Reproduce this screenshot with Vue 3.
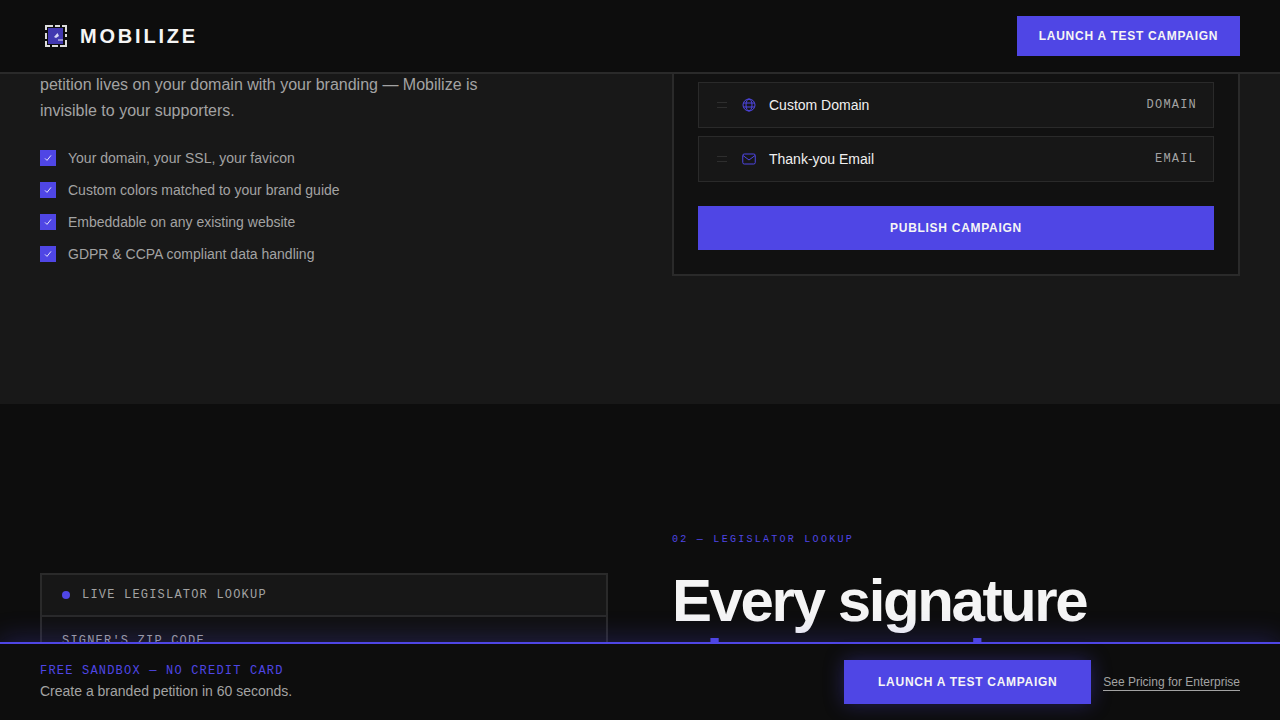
<template>
  <div class="page">
    <header class="topbar">
      <div class="brand">
        <svg class="brand__mark" width="24" height="24" viewBox="0 0 24 24" aria-hidden="true">
          <rect x="4" y="4" width="15" height="16" fill="#4238b0" />
          <path d="M10 13l3.500-4 1.500 3-3 2z" fill="#d8d6f5" />
          <path d="M14 16h5" stroke="#e8e8f5" stroke-width="1" />
          <path
            d="M2 6V2h7M11 2h5M18 2h4v6M22 10v3M22 16v6h-6M14 22H8M6 22H2v-5M2 15v-6"
            fill="none"
            stroke="#dcdcdc"
            stroke-width="2"
          />
        </svg>
        <span class="brand__name">MOBILIZE</span>
      </div>
      <button class="btn btn--top" type="button">LAUNCH A TEST CAMPAIGN</button>
    </header>

    <main class="scroller">
      <section class="band band--branding">
        <div class="copy">
          <p class="copy__lead">
            petition lives on your domain with your branding — Mobilize is invisible to your supporters.
          </p>
          <ul class="checks">
            <li v-for="item in checks" :key="item" class="checks__item">
              <span class="checks__box">
                <svg width="10" height="10" viewBox="0 0 10 10" aria-hidden="true">
                  <path d="M2 5.400l2 2 4-5" fill="none" stroke="#e6e4fb" stroke-width="1" />
                </svg>
              </span>
              {{ item }}
            </li>
          </ul>
        </div>

        <div class="builder">
          <div v-for="row in rows" :key="row.name" class="builder__row">
            <span class="handle"></span>
            <svg v-if="row.tag === 'DOMAIN'" class="row-icon" width="14" height="14" viewBox="0 0 14 14" aria-hidden="true">
              <circle cx="7" cy="7" r="6" />
              <ellipse cx="7" cy="7" rx="3" ry="6" />
              <path d="M1.400 5h11.200M1.400 9h11.200" />
            </svg>
            <svg v-else class="row-icon" width="14" height="14" viewBox="0 0 14 14" aria-hidden="true">
              <rect x="0.750" y="2" width="12.500" height="10" rx="1.500" />
              <path d="M1 3.500l6 4.500 6-4.500" />
            </svg>
            <span class="builder__name">{{ row.name }}</span>
            <span class="builder__tag">{{ row.tag }}</span>
          </div>
          <button class="btn btn--publish" type="button">PUBLISH CAMPAIGN</button>
        </div>
      </section>

      <section class="band band--lookup">
        <div class="lookup">
          <div class="lookup__head">
            <span class="lookup__dot"></span>
            LIVE LEGISLATOR LOOKUP
          </div>
          <div class="lookup__body">SIGNER'S ZIP CODE</div>
        </div>
        <div class="pitch">
          <div class="pitch__eyebrow">02 — LEGISLATOR LOOKUP</div>
          <h2 class="pitch__title">Every signature <span class="accent">pings your issue</span></h2>
        </div>
      </section>
    </main>

    <footer class="stickybar">
      <div class="stickybar__text">
        <div class="stickybar__kicker">FREE SANDBOX — NO CREDIT CARD</div>
        <div class="stickybar__line">Create a branded petition in 60 seconds.</div>
      </div>
      <div class="stickybar__actions">
        <button class="btn btn--cta" type="button">LAUNCH A TEST CAMPAIGN</button>
        <a class="stickybar__link" href="#">See Pricing for Enterprise</a>
      </div>
    </footer>
  </div>
</template>

<script setup>
const checks = [
  'Your domain, your SSL, your favicon',
  'Custom colors matched to your brand guide',
  'Embeddable on any existing website',
  'GDPR & CCPA compliant data handling'
];

const rows = [
  { name: 'Custom Domain', tag: 'DOMAIN' },
  { name: 'Thank-you Email', tag: 'EMAIL' }
];
</script>

<style scoped>
.page {
  height: 720px;
  display: flex;
  flex-direction: column;
  overflow: hidden;
  background: #0d0d0d;
  font-family: "Liberation Sans", Arial, sans-serif;
}

.topbar {
  flex: none;
  height: 72px;
  padding: 0 40px;
  display: flex;
  align-items: center;
  justify-content: space-between;
  background: #0d0d0d;
  border-bottom: 2px solid #2a2a2a;
  position: relative;
  z-index: 2;
}

.brand {
  display: flex;
  align-items: center;
  gap: 12px;
  padding-left: 4px;
}

.brand__mark {
  display: block;
}

.brand__name {
  color: #f5f5f5;
  font-size: 20px;
  font-weight: 700;
  letter-spacing: 2.8px;
}

.btn {
  border: none;
  border-radius: 0;
  background: #4f46e5;
  color: #f5f5f5;
  font-family: inherit;
  font-size: 12px;
  font-weight: 700;
  letter-spacing: 0.72px;
  padding: 0;
}

.btn--top {
  width: 223px;
  height: 40px;
}

.scroller {
  flex: 1;
  min-height: 0;
  overflow: hidden;
}

.band {
  padding: 0 40px;
  display: grid;
  grid-template-columns: 568px 568px;
  gap: 64px;
  align-items: start;
}

.band--branding {
  height: 330px;
  background: #181818;
}

.band--lookup {
  padding-top: 129px;
  background: #0d0d0d;
}

.copy__lead {
  margin: -2px 0 0;
  max-width: 460px;
  color: #a3a3a3;
  font-size: 16px;
  line-height: 26px;
}

.checks {
  margin: 18px 0 0;
  padding: 0;
  list-style: none;
}

.checks__item {
  height: 32px;
  display: flex;
  align-items: center;
  gap: 12px;
  color: #a3a3a3;
  font-size: 14px;
}

.checks__box {
  width: 16px;
  height: 16px;
  flex: none;
  display: flex;
  align-items: center;
  justify-content: center;
  background: #4f46e5;
}

.builder {
  margin-top: -22px;
  padding: 28px 24px 24px;
  display: flex;
  flex-direction: column;
  gap: 8px;
  background: #111111;
  border: 2px solid #2a2a2a;
}

.builder__row {
  height: 46px;
  box-sizing: border-box;
  padding: 0 16px 0 18px;
  display: flex;
  align-items: center;
  background: #171717;
  border: 1px solid #2a2a2a;
}

.handle {
  width: 10px;
  height: 4px;
  border-top: 1px solid #2e2e2e;
  border-bottom: 1px solid #2e2e2e;
  margin-right: 15px;
}

.row-icon {
  flex: none;
  margin-right: 13px;
  fill: none;
  stroke: #4f46e5;
  stroke-width: 1;
}

.builder__name {
  flex: 1;
  color: #f0f0f0;
  font-size: 14px;
}

.builder__tag {
  color: #a3a3a3;
  font-family: "Liberation Mono", monospace;
  font-size: 12px;
  letter-spacing: 1.2px;
}

.btn--publish {
  height: 44px;
  margin-top: 16px;
}

.lookup {
  margin-top: 40px;
  border: 2px solid #2a2a2a;
  background: #111111;
  font-family: "Liberation Mono", monospace;
  font-size: 12px;
  letter-spacing: 1.2px;
  color: #a3a3a3;
}

.lookup__head {
  height: 40px;
  padding: 0 20px;
  display: flex;
  align-items: center;
  gap: 12px;
  background: #171717;
  border-bottom: 2px solid #2a2a2a;
}

.lookup__dot {
  width: 8px;
  height: 8px;
  border-radius: 50%;
  background: #4f46e5;
}

.lookup__body {
  padding: 17px 20px;
}

.pitch__eyebrow {
  color: #4f46e5;
  font-family: "Liberation Mono", monospace;
  font-size: 10px;
  line-height: 14px;
  letter-spacing: 2.27px;
}

.pitch__title {
  margin: 24px 0 0;
  color: #f5f5f5;
  font-size: 60px;
  font-weight: 700;
  line-height: 60px;
  letter-spacing: -2.4px;
}

.accent {
  color: #4f46e5;
}

.stickybar {
  flex: none;
  height: 76px;
  padding: 0 40px;
  display: flex;
  align-items: center;
  justify-content: space-between;
  background: #0d0d0d;
  border-top: 2px solid #4f46e5;
  box-shadow: 0 -4px 24px rgba(79, 70, 229, 0.25);
  position: relative;
  z-index: 2;
}

.stickybar__text {
  padding-bottom: 2px;
}

.stickybar__kicker {
  color: #4f46e5;
  font-family: "Liberation Mono", monospace;
  font-size: 12px;
  line-height: 16px;
  letter-spacing: 1.2px;
}

.stickybar__line {
  margin-top: 3px;
  color: #a3a3a3;
  font-size: 14px;
  line-height: 18px;
}

.stickybar__actions {
  display: flex;
  align-items: center;
  gap: 12px;
}

.btn--cta {
  width: 247px;
  height: 44px;
  box-shadow: 0 0 20px rgba(79, 70, 229, 0.35);
}

.stickybar__link {
  margin-top: 2px;
  color: #a3a3a3;
  font-size: 12px;
  line-height: 15px;
  text-decoration: none;
  border-bottom: 1px solid #a3a3a3;
}
</style>
